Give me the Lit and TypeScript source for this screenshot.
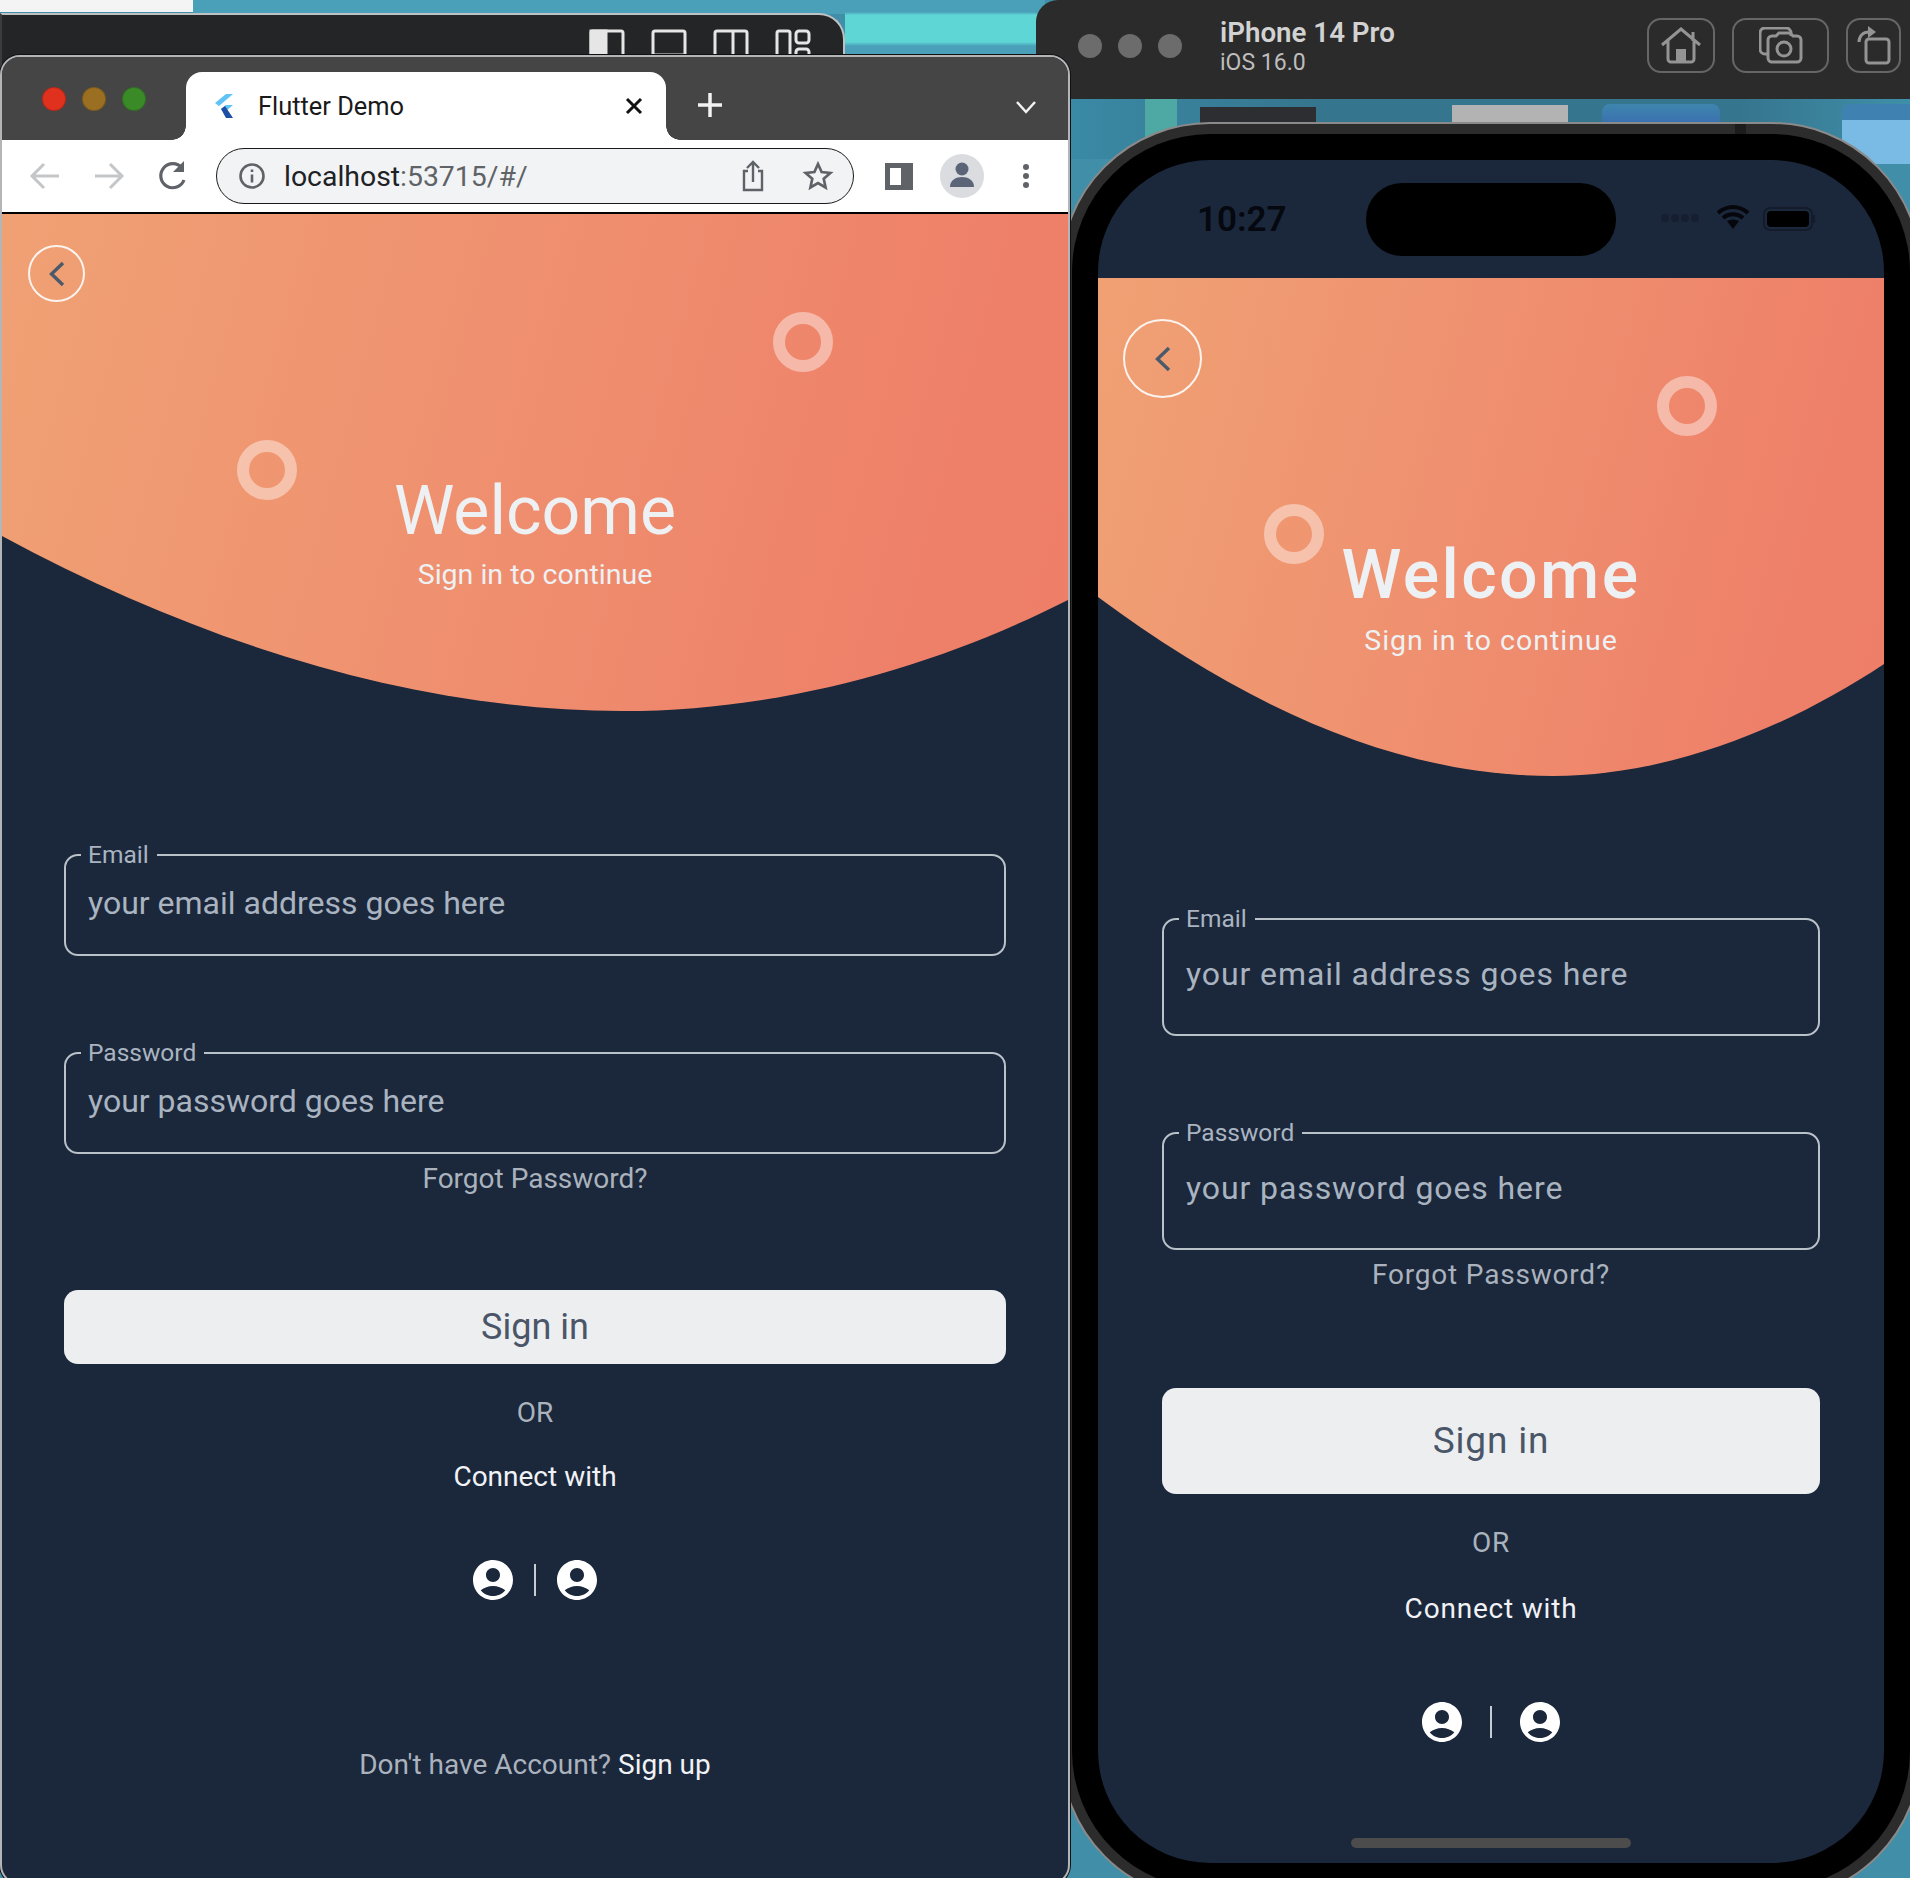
import { LitElement, html, css, svg } from 'lit';
import { customElement, property } from 'lit/decorators.js';

const accountIcon = svg`<path d="M12 2C6.48 2 2 6.48 2 12s4.48 10 10 10 10-4.48 10-10S17.52 2 12 2zm0 4c1.93 0 3.5 1.57 3.5 3.5S13.93 13 12 13s-3.5-1.57-3.5-3.5S10.07 6 12 6zm0 14c-2.03 0-4.43-.82-6.14-2.88C7.55 15.8 9.68 15 12 15s4.45.8 6.14 2.12C16.43 19.18 14.03 20 12 20z"/>`;

@customElement('login-view')
export class LoginView extends LitElement {
  @property({ reflect: true }) variant = 'browser';

  static styles = css`
    :host {
      display: block;
      background: #1b273b;
      font-family: Roboto, 'Noto Sans', sans-serif;
      --hero-h: 497px;
      --curve: path('M0 0H1068V385C940 450 785 497 620 497C415 497 200 430 0 322Z');
      --back-size: 57px;
      --back-x: 26px;
      --back-y: 31px;
      --ring-a-x: 771px;
      --ring-a-y: 98px;
      --ring-b-x: 235px;
      --ring-b-y: 226px;
      --title-size: 68px;
      --title-ls: 0;
      --title-w: 400;
      --title-top: 251px;
      --sub-top: 2px;
      --sub-size: 28.5px;
      --sub-ls: 0;
      --form-x: 62px;
      --form-w: 942px;
      --field-first: 143px;
      --field-h: 102px;
      --field-gap: 96px;
      --field-text: 32px;
      --field-ls: 0;
      --field-pad: 4px;
      --label-size: 24.5px;
      --body-ls: 0;
      --forgot-gap: 10px;
      --btn-gap: 96px;
      --btn-h: 74px;
      --btn-size: 36px;
      --or-gap: 34px;
      --connect-gap: 34px;
      --icons-gap: 68px;
      --icons-space: 21px;
      --signup-gap: 150px;
    }
    :host([variant='phone']) {
      --hero-h: 498px;
      --curve: path('M0 0H786V386C690 450 570 498 455 498C300 498 150 430 0 319Z');
      --back-size: 79px;
      --back-x: 25px;
      --back-y: 41px;
      --ring-a-x: 559px;
      --ring-a-y: 98px;
      --ring-b-x: 166px;
      --ring-b-y: 226px;
      --title-ls: 2.4px;
      --title-w: 500;
      --title-top: 251px;
      --sub-top: 4px;
      --sub-ls: 1px;
      --sub-w: 450;
      --form-x: 64px;
      --form-w: 658px;
      --field-first: 142px;
      --field-h: 118px;
      --field-gap: 96px;
      --field-ls: 0.9px;
      --field-pad: 6px;
      --body-ls: 0.8px;
      --forgot-gap: 10px;
      --btn-gap: 98px;
      --btn-h: 106px;
      --btn-size: 37px;
      --or-gap: 34px;
      --connect-gap: 36px;
      --icons-gap: 78px;
      --icons-space: 28px;
    }

    .hero {
      position: relative;
      height: var(--hero-h);
      box-sizing: border-box;
      padding-top: var(--title-top);
      text-align: center;
      color: #eef1f3;
      background: linear-gradient(105deg, #f0a174 0%, #ef8f6f 48%, #ee8069 85%, #ee7e68 100%);
      clip-path: var(--curve);
    }
    .title {
      font-size: var(--title-size);
      font-weight: var(--title-w);
      letter-spacing: var(--title-ls);
      line-height: 92px;
    }
    .sub {
      margin-top: var(--sub-top);
      font-size: var(--sub-size);
      font-weight: var(--sub-w, 400);
      letter-spacing: var(--sub-ls);
      line-height: 32px;
    }
    .back {
      position: absolute;
      left: var(--back-x);
      top: var(--back-y);
      width: var(--back-size);
      height: var(--back-size);
      box-sizing: border-box;
      border: 2px solid #fbf3ee;
      border-radius: 50%;
      display: flex;
      align-items: center;
      justify-content: center;
    }
    .back svg {
      width: 28px;
      height: 28px;
    }
    .ring {
      position: absolute;
      width: 60px;
      height: 60px;
      box-sizing: border-box;
      border: 12px solid rgba(255, 255, 255, 0.42);
      border-radius: 50%;
    }
    .ring.a {
      left: var(--ring-a-x);
      top: var(--ring-a-y);
    }
    .ring.b {
      left: var(--ring-b-x);
      top: var(--ring-b-y);
    }

    .form {
      width: var(--form-w);
      margin-left: var(--form-x);
      padding-top: var(--field-first);
      text-align: center;
      font-size: 28px;
      line-height: 30px;
      letter-spacing: var(--body-ls);
    }
    .field {
      position: relative;
      height: var(--field-h);
      box-sizing: border-box;
      border: 2px solid #b9c1c9;
      border-radius: 14px;
      display: flex;
      align-items: center;
      padding: 0 0 var(--field-pad) 22px;
      color: #a9b4c0;
      font-size: var(--field-text);
      letter-spacing: var(--field-ls);
      text-align: left;
    }
    .field + .field {
      margin-top: var(--field-gap);
    }
    .label {
      position: absolute;
      left: 15px;
      top: -16px;
      padding: 0 8px 0 7px;
      background: #1b273b;
      font-size: var(--label-size);
      letter-spacing: 0;
      line-height: 30px;
    }
    .forgot {
      margin-top: var(--forgot-gap);
      color: #aab3bd;
    }
    .signin {
      margin-top: var(--btn-gap);
      height: var(--btn-h);
      border-radius: 14px;
      background: #eceef0;
      color: #4a5568;
      font-size: var(--btn-size);
      display: flex;
      align-items: center;
      justify-content: center;
    }
    .or {
      margin-top: var(--or-gap);
      color: #aab3bd;
    }
    .connect {
      margin-top: var(--connect-gap);
      color: #f0f2f5;
    }
    .icons {
      margin-top: var(--icons-gap);
      display: flex;
      justify-content: center;
      align-items: center;
      gap: var(--icons-space);
    }
    .icons svg {
      width: 48px;
      height: 48px;
      margin: -4px;
      fill: #fff;
    }
    .icons i {
      width: 1.5px;
      height: 32px;
      background: #c6ccd3;
    }
    .signup {
      margin-top: var(--signup-gap);
      color: #aab3bd;
    }
    .signup b {
      font-weight: 400;
      color: #f0f2f5;
    }
  `;

  render() {
    return html`
      <div class="hero">
        <div class="back">
          <svg viewBox="0 0 28 28" fill="none" stroke="#4a5a6a" stroke-width="3.4"><path d="M20 3L8.5 14 20 25" /></svg>
        </div>
        <div class="ring a"></div>
        <div class="ring b"></div>
        <div class="title">Welcome</div>
        <div class="sub">Sign in to continue</div>
      </div>
      <div class="form">
        <div class="field"><span class="label">Email</span>your email address goes here</div>
        <div class="field"><span class="label">Password</span>your password goes here</div>
        <div class="forgot">Forgot Password?</div>
        <div class="signin">Sign in</div>
        <div class="or">OR</div>
        <div class="connect">Connect with</div>
        <div class="icons">
          <svg viewBox="0 0 24 24">${accountIcon}</svg><i></i><svg viewBox="0 0 24 24">${accountIcon}</svg>
        </div>
        ${this.variant === 'browser'
          ? html`<div class="signup">Don't have Account? <b>Sign up</b></div>`
          : ''}
      </div>
    `;
  }
}

@customElement('app-root')
export class AppRoot extends LitElement {
  static styles = css`
    :host {
      display: block;
      font-family: Roboto, 'Noto Sans', sans-serif;
    }
    .desktop {
      position: relative;
      height: 1878px;
      overflow: hidden;
      background: #418ea9;
    }
    /* bits of the desktop behind the windows */
    .paper {
      position: absolute;
      left: 0;
      top: 0;
      width: 193px;
      height: 12px;
      background: #f4f4f4;
    }
    .stripe {
      position: absolute;
      left: 845px;
      top: 0;
      width: 200px;
      height: 56px;
      background: linear-gradient(#4a9fb9 0 12px, #5ed6d5 15px 42px, #4a9fb9 46px);
    }
    .top-band {
      position: absolute;
      left: 193px;
      top: 0;
      width: 660px;
      height: 14px;
      background: #4a9fb9;
    }
    .strip {
      position: absolute;
      left: 1060px;
      top: 99px;
      width: 850px;
      height: 60px;
      background: linear-gradient(90deg, #3a8aa6, #36758e 30%, #36758e 80%, #3f8fa9);
    }
    .thumb {
      position: absolute;
      top: 107px;
      height: 20px;
    }
    .thumb.dark {
      left: 1200px;
      width: 116px;
      background: #2d2e31;
    }
    .thumb.grey {
      left: 1452px;
      width: 116px;
      top: 105px;
      background: #b3b3b3;
    }
    .thumb.folder {
      left: 1602px;
      width: 118px;
      top: 104px;
      border-radius: 8px 8px 0 0;
      background: linear-gradient(#3e86ad, #3a6fb0);
    }
    .thumb.folder2 {
      left: 1842px;
      width: 70px;
      top: 104px;
      height: 60px;
      border-radius: 8px 0 0 0;
      background: linear-gradient(#3f82b2 0 16px, #79bbe4 16px);
    }
    .thumb.teal {
      left: 1145px;
      width: 32px;
      top: 99px;
      height: 50px;
      background: #4ea8a4;
    }

    .back-window {
      position: absolute;
      left: 0;
      top: 13px;
      width: 845px;
      height: 70px;
      box-sizing: border-box;
      border: 2px solid #3c3c3c;
      border-top-color: #bfc1c3;
      border-right-color: #bfc1c3;
      border-radius: 0 26px 0 0;
      background: #242526;
      display: flex;
      justify-content: flex-end;
      gap: 26px;
      padding: 14px 32px 0 0;
    }
    .back-window svg {
      width: 36px;
      height: 40px;
      fill: none;
      stroke: #e6e6e6;
      stroke-width: 3;
    }

    .browser {
      position: absolute;
      left: 0;
      top: 55px;
      width: 1070px;
      height: 1830px;
      box-sizing: border-box;
      border: 2px solid #b4b5b7;
      border-radius: 20px;
      overflow: hidden;
      background: #1b273b;
      box-shadow: 0 0 0 1px #111;
      z-index: 2;
    }
    .tabstrip {
      height: 83px;
      box-sizing: border-box;
      background: #454545;
      display: flex;
      align-items: flex-end;
      padding-right: 31px;
    }
    .lights {
      width: 184px;
      height: 100%;
      box-sizing: border-box;
      padding: 30px 0 0 40px;
      display: flex;
      gap: 16px;
    }
    .lights i {
      width: 24px;
      height: 24px;
      box-sizing: border-box;
      border-radius: 50%;
      border: 1.5px solid rgba(0, 0, 0, 0.18);
    }
    .tab {
      position: relative;
      width: 480px;
      height: 68px;
      box-sizing: border-box;
      border-radius: 16px 16px 0 0;
      background: #fff;
      display: flex;
      align-items: center;
      padding: 0 23px 0 28px;
      font-size: 25.4px;
      color: #1a1a1a;
    }
    .tab .name {
      margin-left: 24px;
      flex: 1;
    }
    .tab::before,
    .tab::after {
      content: '';
      position: absolute;
      bottom: 0;
      width: 14px;
      height: 14px;
      background: radial-gradient(circle at 0 0, #454545 13.5px, #fff 14px);
    }
    .tab::before {
      left: -14px;
    }
    .tab::after {
      right: -14px;
      transform: scaleX(-1);
    }
    .plus {
      margin: 0 0 22px 31px;
      width: 26px;
      height: 26px;
      flex: 1;
    }
    .chev {
      margin-bottom: 26px;
      width: 22px;
      height: 14px;
    }
    .toolbar {
      height: 72px;
      box-sizing: border-box;
      background: #fff;
      display: flex;
      align-items: center;
      padding: 0 14px 0 26px;
    }
    .toolbar .nav {
      width: 34px;
      height: 34px;
      margin-right: 30px;
      flex: none;
    }
    .toolbar .nav:nth-child(3) {
      margin-right: 26px;
    }
    .omni {
      width: 638px;
      height: 56px;
      box-sizing: border-box;
      border: 1.5px solid #1a1a1a;
      border-radius: 28px;
      background: #f1f3f4;
      display: flex;
      align-items: center;
      padding: 0 19px 0 21px;
      font-size: 28.4px;
      color: #5f6368;
    }
    .omni .url {
      flex: 1;
      margin-left: 18px;
    }
    .omni .url b {
      font-weight: 400;
      color: #202124;
    }
    .omni svg {
      flex: none;
    }
    .side {
      margin-left: 31px;
      width: 28px;
      height: 27px;
      box-sizing: border-box;
      border: 5px solid #5f6368;
      border-right-width: 12px;
    }
    .avatar {
      margin-left: 27px;
      width: 44px;
      height: 44px;
      border-radius: 50%;
      background: #dadce0;
    }
    .dots {
      margin-left: 38px;
      width: 8px;
      height: 26px;
    }
    .line {
      height: 2px;
      background: #000;
    }

    .sim-bar {
      position: absolute;
      left: 1036px;
      top: 0;
      width: 880px;
      height: 99px;
      box-sizing: border-box;
      border-radius: 22px 0 0 0;
      background: #2b2b2b;
      display: flex;
      align-items: center;
      padding: 0 15px 8px 42px;
      color: #d2d2d2;
    }
    .sim-lights {
      display: flex;
      gap: 16px;
    }
    .sim-lights i {
      width: 24px;
      height: 24px;
      border-radius: 50%;
      background: #6c6c6c;
    }
    .sim-title {
      margin: 2px 0 0 38px;
      flex: 1;
    }
    .sim-title b {
      display: block;
      font-size: 27.7px;
      line-height: 32px;
      font-weight: 600;
    }
    .sim-title span {
      display: block;
      font-size: 23px;
      line-height: 28px;
      color: #bdbdbd;
    }
    .sim-btn {
      height: 55px;
      box-sizing: border-box;
      border: 2px solid #666;
      border-radius: 14px;
      margin-left: 17px;
      display: flex;
      align-items: center;
      justify-content: center;
    }
    .sim-btn svg {
      fill: none;
      stroke: #949494;
      stroke-width: 3;
    }

    .device {
      position: absolute;
      left: 1060px;
      top: 122px;
      width: 862px;
      height: 1779px;
      box-sizing: border-box;
      padding: 10px;
      border: 2px solid #8a8a8a;
      border-radius: 150px;
      background: #2c2c2c;
    }
    .speaker {
      position: absolute;
      left: 673px;
      top: 0;
      width: 11px;
      height: 10px;
      background: #1c1c1c;
    }
    .bezel {
      height: 100%;
      box-sizing: border-box;
      padding: 26px;
      border-radius: 138px;
      background: #000;
    }
    .screen {
      position: relative;
      height: 100%;
      border-radius: 112px;
      overflow: hidden;
      background: #1b273b;
    }
    .status {
      height: 118px;
      box-sizing: border-box;
      padding-top: 23px;
      display: flex;
      align-items: flex-start;
    }
    .time {
      width: 268px;
      box-sizing: border-box;
      padding: 19px 0 0 99px;
      font-size: 35px;
      line-height: 36px;
      font-weight: 600;
      color: #05080f;
    }
    .island {
      width: 250px;
      height: 73px;
      border-radius: 36px;
      background: #000;
    }
    .signal {
      margin: 0 0 0 44px;
      padding-top: 27px;
      display: flex;
      align-items: flex-start;
      gap: 13px;
    }
    .home {
      position: absolute;
      left: 253px;
      bottom: 15px;
      width: 280px;
      height: 10px;
      border-radius: 5px;
      background: #4c4c4c;
    }
  `;

  render() {
    return html`
      <div class="desktop">
        <div class="paper"></div>
        <div class="top-band"></div>
        <div class="stripe"></div>
        <div class="strip"></div>
        <div class="thumb teal"></div>
        <div class="thumb dark"></div>
        <div class="thumb grey"></div>
        <div class="thumb folder"></div>
        <div class="thumb folder2"></div>

        <div class="back-window">
          <svg viewBox="0 0 36 40"><rect x="2" y="2" width="32" height="30" rx="2" /><rect x="2" y="2" width="15" height="30" fill="#e6e6e6" /></svg>
          <svg viewBox="0 0 36 40"><rect x="2" y="2" width="32" height="30" rx="2" /><path d="M2 26h32" /></svg>
          <svg viewBox="0 0 36 40"><rect x="2" y="2" width="32" height="30" rx="2" /><path d="M20 2v30" /></svg>
          <svg viewBox="0 0 36 40"><rect x="2" y="2" width="13" height="30" rx="2" /><rect x="21" y="2" width="13" height="12" rx="3" /><rect x="21" y="20" width="13" height="12" rx="3" /></svg>
        </div>

        <div class="browser">
          <div class="tabstrip">
            <div class="lights">
              <i style="background:#e0301e"></i><i style="background:#9a6f21"></i><i style="background:#3a8a28"></i>
            </div>
            <div class="tab">
              <svg width="20" height="24" viewBox="0 0 20 24">
                <path d="M12 0h7L5 12l-4-3z" fill="#5ec4f7" />
                <path d="M12 11h7l-8 7-4-3z" fill="#5ec4f7" />
                <path d="M7 15l4-3 8 12h-7z" fill="#1d4fa5" />
              </svg>
              <span class="name">Flutter Demo</span>
              <svg width="18" height="18" viewBox="0 0 18 18" stroke="#111" stroke-width="3"><path d="M2 2l14 14M16 2L2 16" /></svg>
            </div>
            <svg class="plus" viewBox="0 0 26 26" preserveAspectRatio="xMinYMid" stroke="#f2f2f2" stroke-width="3.5"><path d="M13 1v24M1 13h24" /></svg>
            <svg class="chev" viewBox="0 0 22 14" fill="none" stroke="#f2f2f2" stroke-width="2.5"><path d="M2 2l9 10 9-10" /></svg>
          </div>
          <div class="toolbar">
            <svg class="nav" viewBox="0 0 34 34" fill="none" stroke="#c4c6c8" stroke-width="3"><path d="M31 17H4M16 5L4 17l12 12" /></svg>
            <svg class="nav" viewBox="0 0 34 34" fill="none" stroke="#c4c6c8" stroke-width="3"><path d="M3 17h27M18 5l12 12-12 12" /></svg>
            <svg class="nav" viewBox="0 0 34 34" fill="none" stroke="#5f6368" stroke-width="3.2"><path d="M28 21a12 12 0 1 1-2-12" /><path d="M28 2v11H17z" fill="#5f6368" stroke="none" /></svg>
            <div class="omni">
              <svg width="28" height="28" viewBox="0 0 28 28" fill="none" stroke="#5f6368" stroke-width="2.6"><circle cx="14" cy="14" r="11.5" /><path d="M14 12.5v8M14 7.5v2.6" /></svg>
              <span class="url"><b>localhost</b>:53715/#/</span>
              <svg width="26" height="32" viewBox="0 0 26 32" fill="none" stroke="#5f6368" stroke-width="2.4"><path d="M8 11H4v19h18V11h-4M13 22V3M7 8l6-6 6 6" /></svg>
              <svg style="margin-left:36px" width="32" height="32" viewBox="0 0 24 24" fill="none" stroke="#5f6368" stroke-width="2"><path d="M12 3l2.7 6 6.6.7-5 4.4 1.4 6.5L12 17.3l-5.7 3.3 1.4-6.5-5-4.4 6.6-.7z" /></svg>
            </div>
            <div class="side"></div>
            <svg class="avatar" viewBox="0 0 44 44" fill="#5b6577"><circle cx="22" cy="15" r="6.5" /><path d="M10 33c0-7 6-10 12-10s12 3 12 10z" /></svg>
            <svg class="dots" viewBox="0 0 8 26" fill="#5f6368"><circle cx="4" cy="4" r="3" /><circle cx="4" cy="13" r="3" /><circle cx="4" cy="22" r="3" /></svg>
          </div>
          <div class="line"></div>
          <login-view variant="browser"></login-view>
        </div>

        <div class="sim-bar">
          <div class="sim-lights"><i></i><i></i><i></i></div>
          <div class="sim-title"><b>iPhone 14 Pro</b><span>iOS 16.0</span></div>
          <div class="sim-btn" style="width:68px">
            <svg width="42" height="38" viewBox="0 0 42 38"><path d="M2 18L21 2l19 16M33 5v9M8 14v18a3 3 0 0 0 3 3h20a3 3 0 0 0 3-3V14" /><path d="M16 35V22h10v13z" fill="#949494" stroke="none" /></svg>
          </div>
          <div class="sim-btn" style="width:97px">
            <svg width="44" height="38" viewBox="0 0 44 38"><path d="M8 27H6a5 5 0 0 1-5-5V6a5 5 0 0 1 5-5h21a5 5 0 0 1 5 5v3" /><path d="M13 9h4l3-3h11l3 3h4a4 4 0 0 1 4 4v18a4 4 0 0 1-4 4H13a4 4 0 0 1-4-4V13a4 4 0 0 1 4-4z" /><circle cx="25" cy="22" r="7" /></svg>
          </div>
          <div class="sim-btn" style="width:55px">
            <svg width="36" height="40" viewBox="0 0 36 40"><rect x="10" y="13" width="23" height="24" rx="3" /><path d="M3 16C3 10 7 6 13 6" /><path d="M12 0l8 6-8 6z" fill="#949494" stroke="none" /></svg>
          </div>
        </div>

        <div class="device">
          <div class="speaker"></div>
          <div class="bezel">
            <div class="screen">
              <div class="status">
                <div class="time">10:27</div>
                <div class="island"></div>
                <div class="signal">
                  <svg width="40" height="12" viewBox="0 0 40 12" fill="#161f31"><circle cx="5" cy="8" r="4" /><circle cx="15" cy="8" r="4" /><circle cx="25" cy="8" r="4" /><circle cx="35" cy="8" r="4" /></svg>
                  <svg style="margin:-6px 0 0 3px" width="34" height="26" viewBox="0 0 34 26" fill="none" stroke="#05070c" stroke-width="4"><path d="M2 9c9-8 21-8 30 0M7 14c6-5 14-5 20 0" /><path d="M11 17c4-2 8-2 12 0l-6 8z" fill="#05070c" stroke="none" /></svg>
                  <svg style="margin:-3px 0 0 0" width="54" height="24" viewBox="0 0 54 24"><rect x="1" y="1" width="48" height="22" rx="6" fill="none" stroke="#141c2c" stroke-width="2" /><rect x="4" y="4" width="42" height="16" rx="4" fill="#000" /><path d="M51 8v8" stroke="#141c2c" stroke-width="2" /></svg>
                </div>
              </div>
              <login-view variant="phone"></login-view>
              <div class="home"></div>
            </div>
          </div>
        </div>
      </div>
    `;
  }
}
